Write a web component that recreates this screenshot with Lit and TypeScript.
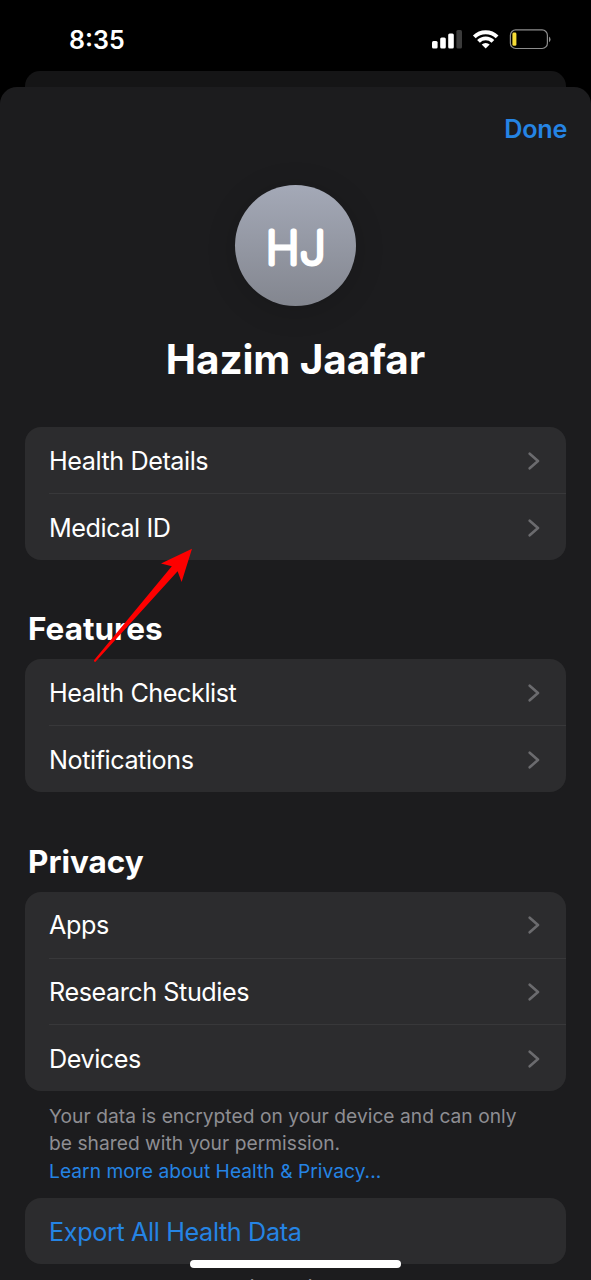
import { LitElement, html, css, svg } from "lit";
import { customElement, property } from "lit/decorators.js";

const chevron = svg`<path d="M1.7 1.7 L10 9 L1.7 16.3" fill="none" stroke="#6b6b6e" stroke-width="2.6" stroke-linecap="round" stroke-linejoin="round"/>`;

@customElement("status-bar")
class StatusBar extends LitElement {
  static styles = css`
    :host { display: flex; justify-content: space-between; align-items: center; height: 71px; padding: 0 40px 0 69px; }
    .time { font-size: 25px; font-weight: 600; letter-spacing: 0; line-height: 30px; padding-top: 9px; }
    svg { display: block; padding-top: 7px; }
  `;
  render() {
    return html`
      <span class="time">8:35</span>
      <svg width="120" height="22" viewBox="431 28 120 22">
        <rect x="432" y="41" width="5.6" height="7.6" rx="1.5" fill="#fff"/>
        <rect x="440.2" y="37.6" width="5.6" height="11" rx="1.5" fill="#fff"/>
        <rect x="448.2" y="33.6" width="5.6" height="15" rx="1.5" fill="#fff"/>
        <rect x="456.4" y="30" width="5.6" height="18.6" rx="1.5" fill="#3b3b3b"/>
        <g fill="none" stroke="#fff" stroke-width="3.9">
          <path d="M474.3 36.9 A16.2 16.2 0 0 1 497.1 36.9"/>
          <path d="M478.5 41.4 A10.2 10.2 0 0 1 492.9 41.4"/>
        </g>
        <path d="M485.7 48.6 L481.7 44.6 A5.8 5.8 0 0 1 489.7 44.6 Z" fill="#fff"/>
        <rect x="510.4" y="29.9" width="37" height="18.6" rx="5.3" fill="none" stroke="#8d8d8d" stroke-width="1.2"/>
        <path d="M549 36.6 a3.3 3.3 0 0 1 0 5.6 Z" fill="#8d8d8d"/>
        <rect x="512.4" y="32.6" width="4" height="13.2" rx="1.4" fill="#f6dc36"/>
      </svg>
    `;
  }
}

@customElement("list-row")
class ListRow extends LitElement {
  @property() label = "";
  static styles = css`
    :host { display: flex; align-items: center; justify-content: space-between; height: 100%; padding: 1.3px 26px 0 0; box-sizing: border-box; }
    .label { font-size: 25.2px; line-height: 32px; letter-spacing: -0.44px; }
    svg { display: block; }
  `;
  render() {
    return html`<span class="label">${this.label}</span><svg width="12" height="18" viewBox="0 0 12 18">${chevron}</svg>`;
  }
}

@customElement("list-card")
class ListCard extends LitElement {
  @property({ type: Array }) items: string[] = [];
  static styles = css`
    :host { display: block; flex: none; background: #2c2c2e; border-radius: 16px; overflow: hidden; padding-left: 24px; }
    .row { height: 66.5px; box-sizing: border-box; }
    .row + .row { border-top: 1px solid #38383a; }
    .row:first-child { height: 66px; }
    .row:last-child { height: 67px; }
  `;
  render() {
    return html`${this.items.map((i) => html`<div class="row"><list-row label=${i}></list-row></div>`)}`;
  }
}

@customElement("app-root")
class AppRoot extends LitElement {
  static styles = css`
    :host { display: block; position: relative; width: 591px; height: 1280px; overflow: hidden; background: #000; color: #fff; font-family: Inter, "Liberation Sans", sans-serif; }
    .behind { height: 15.5px; margin: 0 25px; background: #151516; border-radius: 15px 15px 0 0; }
    .sheet { height: 1194px; width: 591px; background: #1c1c1e; border-radius: 17px 17px 0 0; box-sizing: border-box; padding: 0 25px; display: flex; flex-direction: column; }
    .sheet > * { flex: none; }
    .bar { display: flex; justify-content: flex-end; padding-top: 26px; height: 72px; line-height: 32px; }
    .done { color: #2584e4; font-size: 25.2px; font-weight: 600; letter-spacing: -0.3px; margin-right: -1px; }
    .avatar { width: 121px; height: 121px; border-radius: 50%; align-self: center; background: linear-gradient(#a4a9b7, #83868f); box-shadow: 0 4px 30px rgba(0, 0, 0, 0.16); }
    .avatar svg { display: block; }
    .initials { font-size: 45.2px; font-weight: 100; letter-spacing: 0.5px; fill: #fff; stroke: #fff; stroke-width: 5.2px; stroke-linejoin: round; }
    .name { text-align: center; font-size: 40.5px; line-height: 50px; font-weight: 700; letter-spacing: -0.1px; margin: 29px 0 42.8px; }
    .title { font-size: 31.5px; line-height: 38px; font-weight: 700; margin: 50.2px 0 11px 3px; }
    .note { font-size: 19.2px; line-height: 27.3px; letter-spacing: 0.03px; color: #8e8e93; padding: 12px 0 13px 24px; white-space: nowrap; }
    .link { color: #2584e4; }
    .export { height: 66px; box-sizing: border-box; background: #2c2c2e; border-radius: 16px; padding: 17.6px 24px 0; font-size: 25.2px; line-height: 32px; letter-spacing: -0.37px; color: #2584e4; }
    .tail { font-size: 19.2px; line-height: 27.3px; color: #8e8e93; padding: 10px 0 0 24px; white-space: nowrap; }
    .arrow { position: absolute; left: 90px; top: 545px; }
    .home { position: absolute; left: 190px; top: 1260px; width: 211px; height: 8px; border-radius: 4px; background: #fff; }
  `;
  render() {
    return html`
      <status-bar></status-bar>
      <div class="behind"></div>
      <div class="sheet">
        <div class="bar"><span class="done">Done</span></div>
        <div class="avatar">
          <svg width="121" height="121" viewBox="0 0 121 121"><text class="initials" x="60.8" y="78.8" text-anchor="middle">HJ</text></svg>
        </div>
        <div class="name">Hazim Jaafar</div>
        <list-card .items=${["Health Details", "Medical ID"]}></list-card>
        <div class="title">Features</div>
        <list-card .items=${["Health Checklist", "Notifications"]}></list-card>
        <div class="title">Privacy</div>
        <list-card .items=${["Apps", "Research Studies", "Devices"]}></list-card>
        <div class="note">
          <div>Your data is encrypted on your device and can only</div>
          <div>be shared with your permission.</div>
          <div class="link">Learn more about Health &amp; Privacy...</div>
        </div>
        <div class="export">Export All Health Data</div>
        <div class="tail">Enabled apps and devices will</div>
      </div>
      <svg class="arrow" width="106" height="120" viewBox="90 545 106 120">
        <path d="M192 548.8 L181.6 582 L177.6 571.3 L95.3 662 Q93.6 662 94 660.3 L171.8 566.2 L161 563.5 Z" fill="#fe0000"/>
      </svg>
      <div class="home"></div>
    `;
  }
}
